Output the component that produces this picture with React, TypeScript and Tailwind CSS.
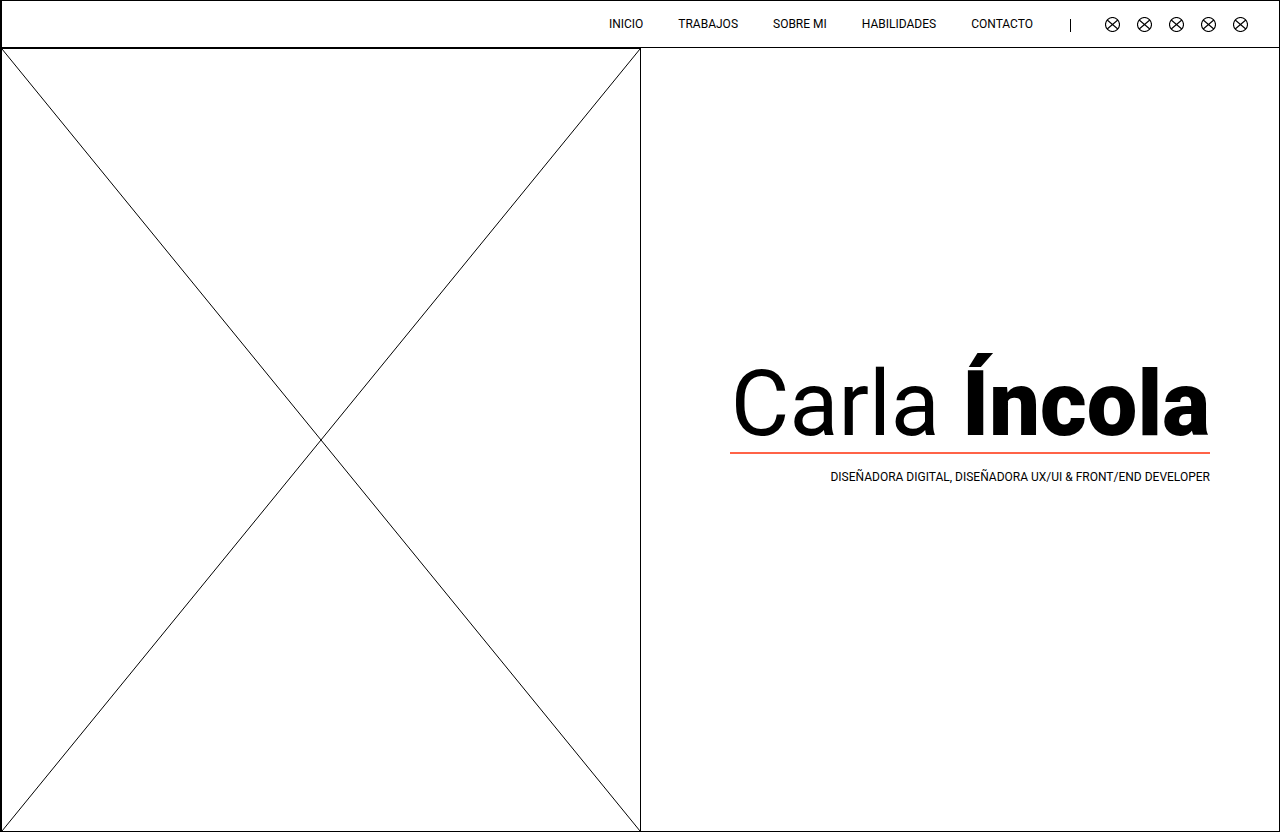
const links = [
  { label: "INICIO", href: "#inicio" },
  { label: "TRABAJOS", href: "#trabajos" },
  { label: "SOBRE MI", href: "#sobre-mi" },
  { label: "HABILIDADES", href: "#habilidades" },
  { label: "CONTACTO", href: "#contacto" },
];

const socials = ["Red social 1", "Red social 2", "Red social 3", "Red social 4", "Red social 5"];

function SocialIcon() {
  return (
    <svg viewBox="0 0 15 15" className="block size-[15px]" fill="none" stroke="#000" strokeWidth="1.1" aria-hidden="true">
      <circle cx="7.5" cy="7.5" r="7" />
      <path d="M2.2 3 12.8 12M12.8 3 2.2 12" />
    </svg>
  );
}

function Header() {
  return (
    <header className="flex h-[47px] items-center justify-end border-b border-l border-black pr-[31px]">
      <nav aria-label="Principal" className="flex gap-[35px] text-xs">
        {links.map((link) => (
          <a key={link.href} href={link.href}>
            {link.label}
          </a>
        ))}
      </nav>
      <span className="mt-[3px] mr-[34px] ml-[37px] h-[13px] border-l border-black" />
      <div className="flex gap-[17px] pt-px">
        {socials.map((name) => (
          <a key={name} href="#contacto" aria-label={name}>
            <SocialIcon />
          </a>
        ))}
      </div>
    </header>
  );
}

function ImagePlaceholder() {
  return (
    <div className="grid border-x border-t border-black">
      <svg className="block h-full w-full" viewBox="0 0 638 782" preserveAspectRatio="none" stroke="#000" strokeWidth="1" aria-hidden="true">
        <path d="M0 0 638 782M638 0 0 782" vectorEffect="non-scaling-stroke" />
      </svg>
    </div>
  );
}

export default function App() {
  return (
    <div className="flex min-h-screen flex-col border border-black bg-white font-['Roboto',sans-serif] text-black">
      <Header />
      <main className="grid flex-1 grid-cols-[640fr_638fr]">
        <ImagePlaceholder />
        <section className="flex flex-col items-end justify-center pr-[69px] pb-[37px]">
          <div className="w-[480px] text-right">
            <h1 className="border-b-2 border-[#ff6347] text-[90px] leading-[95px] font-normal whitespace-nowrap">
              Carla <strong className="font-black">Íncola</strong>
            </h1>
            <p className="mt-[15px] text-xs">DISEÑADORA DIGITAL, DISEÑADORA UX/UI &amp; FRONT/END DEVELOPER</p>
          </div>
        </section>
      </main>
    </div>
  );
}
